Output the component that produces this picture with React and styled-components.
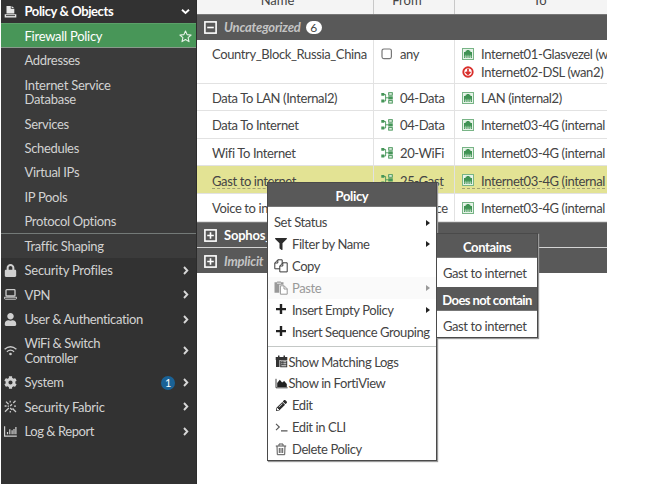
import React from "react";
import styled, { createGlobalStyle, css } from "styled-components";
import { FaLock, FaUser, FaCog, FaFilter, FaPencilAlt } from "react-icons/fa";

const GlobalStyle = createGlobalStyle`
  * { box-sizing: border-box; }
  body { margin: 0; background: #fff; overflow: hidden; }
  svg { flex: none; }
`;

const Screen = styled.div`
  position: relative;
  display: flex;
  width: 650px;
  height: 485px;
  padding-left: 1px;
  overflow: hidden;
  font-family: Lato, "Open Sans", sans-serif;
  font-size: 13px;
  line-height: 14.6px;
  letter-spacing: -0.38px;
  color: #444;
  white-space: nowrap;
`;

/* Sidebar */
const Sidebar = styled.nav`
  width: 196px;
  height: 484px;
  flex: none;
  background: #323232;
  border-right: 1px solid #2c2c2c;
  color: #d2d2d2;
`;

const SubMenu = styled.div`
  background: #3b3b3b;
`;

const NavRow = styled.div`
  display: flex;
  align-items: center;
  height: ${(p) => (p.$tall ? 39 : 24.33)}px;
  padding: 1px 6px 0 3px;
`;

const NavHeader = styled(NavRow)`
  height: 23px;
  padding-bottom: 1px;
  background: #323232;
  color: #fff;
  font-weight: 700;
`;

const ActiveRow = styled(NavRow)`
  height: 25px;
  padding-right: 4px;
  background: #489658;
  border-top: 1px solid #5ba169;
  border-bottom: 1px solid #8a9a8c;
  color: #fff;
`;

const LastSubRow = styled(NavRow)`
  height: 25px;
  border-top: 1px solid #747a78;
`;

const NavIcon = styled.span`
  display: flex;
  justify-content: center;
  width: 13px;
  margin-right: 7.5px;
`;

const NavLabel = styled.span`
  flex: 1;
  letter-spacing: ${(p) => p.$ls || -0.33}px;
`;

const CountBadge = styled.span`
  width: 14px;
  height: 14px;
  margin-right: 6px;
  border-radius: 50%;
  background: #1a6296;
  color: #fff;
  font-size: 11px;
  line-height: 14px;
  text-align: center;
`;

/* Policy table */
const Table = styled.main`
  width: 410px;
  height: 273px;
  overflow: hidden;
  background: #fff;
`;

const columns = css`
  display: grid;
  grid-template-columns: 177px 81px 152px;
  grid-template-rows: 100%;
`;

const HeadRow = styled.div`
  ${columns}
  height: 14px;
  background: #f4f4f4;
`;

const HeadCell = styled.div`
  display: flex;
  align-items: flex-end;
  justify-content: center;
  min-height: 0;
  padding-right: ${(p) => p.$shift || 0}px;
  padding-bottom: 6px;
  padding-left: ${(p) => p.$indent || 0}px;
  border-right: ${(p) => (p.$last ? 0 : 1)}px solid #c8c8c8;
  letter-spacing: 0;
`;

const GroupRow = styled.div`
  display: flex;
  align-items: center;
  gap: 7px;
  height: ${(p) => p.$h || 26}px;
  padding-top: ${(p) => p.$drop || 0}px;
  padding-left: 7px;
  background: #595959;
  border-top: 1px solid ${(p) => p.$line || "#777"};
  color: #fff;
`;

const GroupName = styled.span`
  font-weight: 700;
  letter-spacing: -0.2px;
`;

const MutedName = styled(GroupName)`
  color: #c4c4c4;
  font-style: italic;
`;

const GroupCount = styled.span`
  width: 16px;
  height: 13px;
  margin-left: -2px;
  border-radius: 7px;
  background: #fff;
  color: #444;
  font-size: 12px;
  line-height: 13px;
  text-align: center;
`;

const Row = styled.div`
  ${columns}
  height: ${(p) => p.$h || 27.67}px;
  background: ${(p) => (p.$selected ? "#e3e394" : "#fff")};
`;

const Cell = styled.div`
  min-width: 0;
  min-height: 0;
  overflow: hidden;
  padding: 5px 0 0 ${(p) => p.$pad || 7}px;
  border-right: ${(p) => (p.$last ? 0 : 1)}px solid #e2e2e2;
  border-bottom: 1px solid #e2e2e2;
`;

const Entry = styled.div`
  display: ${(p) => (p.$block ? "flex" : "inline-flex")};
  align-items: center;
  gap: 7px;
  height: 18px;
  padding-top: 1px;
  border-bottom: 1px ${(p) => (p.$selected ? "dashed #a0a072" : "solid transparent")};
`;

const EntryText = styled.span`
  position: relative;
  top: 0.5px;
`;

/* Context menus */
const Menu = styled.div`
  position: absolute;
  top: 182px;
  left: 267px;
  width: 170px;
  height: 279px;
  border: 1px solid #4a4a4a;
  background: #fff;
  box-shadow: 1px 1px 1px 0 #999;
  letter-spacing: -0.42px;
`;

const SideMenu = styled(Menu)`
  top: 233px;
  left: 436px;
  width: 102px;
  height: 105px;
`;

const MenuTitle = styled.div`
  height: 24px;
  background: #595959;
  border-bottom: 1px solid #777;
  color: #fff;
  font-weight: 700;
  line-height: 26px;
  text-align: center;
  letter-spacing: ${(p) => p.$ls || -0.35}px;
`;

const MenuList = styled.div`
  padding-top: 4.6px;
`;

const MenuItem = styled.div`
  display: flex;
  align-items: center;
  height: 21.9px;
  padding: 0 6px;
  background: ${(p) => (p.$disabled ? "#fafafa" : "#fff")};
  color: ${(p) => (p.$disabled ? "#999" : "#444")};
`;

const MenuIcon = styled.span`
  display: flex;
  flex: none;
  align-items: center;
  justify-content: center;
  width: 14px;
  margin-right: ${(p) => (p.$tight ? 0.5 : 4)}px;
  color: ${(p) => (p.$disabled ? "#999" : "#2c2c2c")};
`;

const MenuLabel = styled.span`
  flex: 1;
`;

const Caret = styled.i`
  border: 3px solid transparent;
  border-left: 4px solid ${(p) => (p.$disabled ? "#999" : "#222")};
  border-right: 0;
`;

const Divider = styled.div`
  height: 1px;
  margin: 3px 0 4px;
  background: #c4c8c6;
`;

const SideItem = styled.div`
  height: 29px;
  padding-left: 6px;
  line-height: 31px;
`;

/* Drawings */
const Chevron = ({ down }) => (
  <svg width="9" height="9" viewBox="0 0 9 9" fill="none" stroke={down ? "#fff" : "#d8d8d8"} strokeWidth="1.9">
    <path d={down ? "M1 2.8 4.5 6 8 2.8" : "M3 1 6.3 4.5 3 8"} />
  </svg>
);

const Star = () => (
  <svg width="13" height="13" viewBox="0 0 13 13" fill="none" stroke="#e8f4ea" strokeWidth="1.1" strokeLinejoin="round">
    <path d="m6.5 1 1.6 3.6 4 .4-3 2.6.9 4-3.5-2.1L3 11.6l.9-4L.9 5l4-.4z" />
  </svg>
);

const PolicyIcon = () => (
  <svg width="13" height="12" viewBox="0 0 13 12" fill="#e6e6e6">
    <path d="M2.5 0h4.3v2.8h3.5v4.7H2.5z" />
    <path d="m7.6 0 2.5 2.1H7.6zM.7 8.2h11.6v3.2H.7z" />
    <path d="M2 9.2h9v.9H2z" fill="#323232" />
  </svg>
);

const Laptop = () => (
  <svg width="13" height="11" viewBox="0 0 13 11" fill="none" stroke="#ccc">
    <rect x="2" y=".7" width="9" height="6.3" rx=".8" strokeWidth="1.3" />
    <path d="M.5 8.2h12v1.3q-.2.7-.8.7H1.3Q.5 10 .5 9.5z" />
  </svg>
);

const Wifi = () => (
  <svg width="13" height="11" viewBox="0 0 13 11" fill="none" stroke="#ccc" strokeWidth="1.3">
    <path d="M.6 4.3Q6.5-.9 12.4 4.3M2.9 6.7q3.6-3 7.2 0" />
    <circle cx="6.5" cy="9" r="1.3" fill="#ccc" stroke="none" />
  </svg>
);

const Fabric = () => (
  <svg width="13" height="13" viewBox="0 0 13 13" fill="none" stroke="#c8c8c8" strokeWidth="1.3">
    <path d="M2 1.6 4.6 4.2M6.2 6 8 4.2M9.2 3l2.3-2.3M1 11.8l3.8-3.8M9 9l3 3M6.2 8l1.7 1.7" />
    <path d="M6.2.8v1.6M10 6.2h2M6.3 11v1.5M.6 6h2M3.6 6.2h1.4M9.6 9H8.3" />
  </svg>
);

const Chart = () => (
  <svg width="13" height="11" viewBox="0 0 13 11" fill="none" stroke="#d2d2d2">
    <path d="M.6.3v9.8h12.2" strokeWidth="1.2" />
    <path d="M3.5 8.2V6M5.8 8.2V3.2M8.1 8.2V4.2M10 8.2V3M11.9 8.2V1" strokeWidth="1.2" />
  </svg>
);

const Toggle = ({ plus }) => (
  <svg width="13" height="13" viewBox="0 0 13 13" fill="none" stroke="#fff">
    <rect x=".9" y=".9" width="11.2" height="11.2" strokeWidth="1.6" />
    <path d={plus ? "M3.2 6.5h6.6M6.5 3.2v6.6" : "M3.2 6.5h6.6"} strokeWidth="1.6" />
  </svg>
);

const Zone = () => (
  <svg width="12" height="12" viewBox="0 0 12 12" fill="none" stroke="#459558">
    <path d="M2.5 2.5H4.6V9H2.5M4.6 5.8H7.4" strokeWidth=".9" />
    <path d="M.3 1h3v2.8h-3zM.3 7.6h3v2.8h-3z" fill="#459558" stroke="none" />
    <rect x="7.7" y=".7" width="3.6" height="2.5" fill="#f4faf4" />
    <path d="M7.2 4.3h4.6v3.2H7.2z" fill="#459558" stroke="none" />
    <rect x="7.7" y="8.6" width="3.6" height="2.5" fill="#f4faf4" />
  </svg>
);

const Port = () => (
  <svg width="12" height="12" viewBox="0 0 12 12">
    <rect x=".5" y=".5" width="11" height="11" fill="#e6f3e8" stroke="#78b486" />
    <path d="M2 8.6V4h1.6V2.8h1.1V2h2.6v.8h1.1V4H10v4.6z" fill="#3f9253" />
    <path d="M2.5 8.4v1.6M4.2 8.4v1.6M6 8.4v1.6M7.8 8.4v1.6M9.5 8.4v1.6" stroke="#3f9253" strokeWidth=".9" />
    <path d="M3.4 6.8v2M5.1 6.8v2M6.9 6.8v2M8.6 6.8v2" stroke="#b7dfbf" strokeWidth=".6" />
  </svg>
);

const Down = () => (
  <svg width="12" height="12" viewBox="0 0 12 12" fill="none">
    <circle cx="6" cy="6" r="4.7" stroke="#d9302c" strokeWidth="1.9" />
    <path d="M6 2.8v5M3.6 5.8 6 8.2l2.4-2.4" stroke="#d9302c" strokeWidth="1.7" />
  </svg>
);

const AnyBox = () => (
  <svg width="12" height="12" viewBox="0 0 12 12" fill="none">
    <rect x="1" y="1" width="9.4" height="9.6" rx="1.8" stroke="#777" strokeWidth="1.2" />
  </svg>
);

const Copy = () => (
  <svg width="14" height="14" viewBox="0 0 14 14" fill="#fff" stroke="#3a3a3a" strokeLinejoin="round">
    <path d="M3.8.8h4.4v9H.8V4z" />
    <path d="M3.8.8V4h-3" fill="none" />
    <path d="M8.8 3.8h4.4v9.1H5.8V7z" />
    <path d="M8.8 3.8V7h-3" fill="none" />
  </svg>
);

const Paste = () => (
  <svg width="14" height="14" viewBox="0 0 14 14" fill="#999">
    <path d="M.5 1.3h2.3L3.3.5h3.4l.5.8h2.3v2.5H5.3v8H.5z" />
    <path d="M3 2.2h4" stroke="#fff" strokeWidth=".8" />
    <path d="M6.4 4.8h3.8l3 3v5.4H6.4z" fill="#fff" stroke="#999" />
    <path d="M10 4.8V8h3.2" fill="none" stroke="#999" />
  </svg>
);

const Plus = () => (
  <svg width="12" height="12" viewBox="0 0 12 12" stroke="#222" strokeWidth="2.4">
    <path d="M1 5.1h10M6 .1v10" />
  </svg>
);

const Logs = () => (
  <svg width="13" height="13" viewBox="0 0 13 13" fill="#333">
    <path d="M.7 2h11.6v3H.7zM3 .4h1.5v3H3zM8.5.4H10v3H8.5z" />
    <path d="M1 5h3.5v7H1zM5.2 5.6h7v6.7h-7z" />
    <path d="M6.3 6.8h1.2M8.3 6.8h3M6.3 8.8h1.2M8.3 8.8h3M6.3 10.8h5" stroke="#fff" strokeWidth=".9" />
  </svg>
);

const Area = () => (
  <svg width="13" height="11" viewBox="0 0 13 11" fill="#222">
    <path d="M1 .8v9h11.6" fill="none" stroke="#444" />
    <path d="M2.2 8.9V5l2.6-3.2 2.3 2.7 2.1-1.4 2.6 3v2.8z" />
  </svg>
);

const Cli = () => (
  <svg width="13" height="11" viewBox="0 0 13 11" fill="none" stroke="#555" strokeWidth="1.1">
    <path d="M1 1.8 4.3 5 1 8.2M6 8.9h6.5" />
  </svg>
);

const Trash = () => (
  <svg width="12" height="13" viewBox="0 0 12 13" fill="none" stroke="#555">
    <path d="M.8 3h10.4M4 2.8V1h4v1.8M2 3l.3 8.7h7.4L10 3M4.3 5v5M6 5v5M7.7 5v5" />
  </svg>
);

const subItems = ["Services", "Schedules", "Virtual IPs", "IP Pools", "Protocol Options"];

const sections = [
  { label: "Security Profiles", icon: <FaLock size={13} color="#d0d0d0" />, ls: -0.24 },
  { label: "VPN", icon: <Laptop /> },
  { label: "User & Authentication", icon: <FaUser size={13} color="#d0d0d0" />, ls: -0.38 },
  { label: ["WiFi & Switch", "Controller"], icon: <Wifi />, ls: -0.42 },
  { label: "System", icon: <FaCog size={13} color="#d0d0d0" />, count: 1 },
  { label: "Security Fabric", icon: <Fabric />, ls: -0.24 },
  { label: "Log & Report", icon: <Chart />, ls: -0.45 },
];

const policies = [
  { name: "Country_Block_Russia_China", from: "any", any: true, h: 43.5, to: [["Internet01-Glasvezel (w"], ["Internet02-DSL (wan2)", true]] },
  { name: "Data To LAN (Internal2)", from: "04-Data", to: [["LAN (internal2)"]] },
  { name: "Data To Internet", from: "04-Data", to: [["Internet03-4G (internal"]] },
  { name: "Wifi To Internet", from: "20-WiFi", to: [["Internet03-4G (internal"]] },
  { name: "Gast to internet", from: "25-Gast", to: [["Internet03-4G (internal"]], selected: true },
  { name: "Voice to internet", from: "30-Voice", to: [["Internet03-4G (internal"]] },
];

const actions = [
  { label: "Set Status", more: true },
  { label: "Filter by Name", icon: <FaFilter size={12} />, more: true },
  { label: "Copy", icon: <Copy /> },
  { label: "Paste", icon: <Paste />, more: true, disabled: true },
  { label: "Insert Empty Policy", icon: <Plus />, more: true },
  { label: "Insert Sequence Grouping", icon: <Plus /> },
];

const tools = [
  { label: "Show Matching Logs", icon: <Logs />, tight: true },
  { label: "Show in FortiView", icon: <Area />, tight: true },
  { label: "Edit", icon: <FaPencilAlt size={11} /> },
  { label: "Edit in CLI", icon: <Cli /> },
  { label: "Delete Policy", icon: <Trash /> },
];

const Action = ({ a }) => (
  <MenuItem $disabled={a.disabled}>
    {a.icon && <MenuIcon $tight={a.tight} $disabled={a.disabled}>{a.icon}</MenuIcon>}
    <MenuLabel>{a.label}</MenuLabel>
    {a.more && <Caret $disabled={a.disabled} />}
  </MenuItem>
);

const SubRow = ({ children, tall }) => (
  <NavRow $tall={tall}>
    <NavIcon />
    <NavLabel $ls={tall ? -0.26 : undefined}>{children}</NavLabel>
  </NavRow>
);

export default function App() {
  return (
    <>
      <GlobalStyle />
      <Screen>
        <Sidebar>
          <NavHeader>
            <NavIcon><PolicyIcon /></NavIcon>
            <NavLabel $ls={-0.4}>Policy &amp; Objects</NavLabel>
            <Chevron down />
          </NavHeader>
          <SubMenu>
            <ActiveRow>
              <NavIcon />
              <NavLabel $ls={-0.26}>Firewall Policy</NavLabel>
              <Star />
            </ActiveRow>
            <SubRow>Addresses</SubRow>
            <SubRow tall>Internet Service<br />Database</SubRow>
            {subItems.map((s) => <SubRow key={s}>{s}</SubRow>)}
            <LastSubRow>
              <NavIcon />
              <NavLabel>Traffic Shaping</NavLabel>
            </LastSubRow>
          </SubMenu>
          {sections.map((s, i) => {
            const tall = Array.isArray(s.label);
            return (
              <NavRow key={i} $tall={tall}>
                <NavIcon>{s.icon}</NavIcon>
                <NavLabel $ls={s.ls}>{tall ? <>{s.label[0]}<br />{s.label[1]}</> : s.label}</NavLabel>
                {s.count && <CountBadge>{s.count}</CountBadge>}
                <Chevron />
              </NavRow>
            );
          })}
        </Sidebar>

        <Table>
          <HeadRow>
            <HeadCell $shift={15}>Name</HeadCell>
            <HeadCell $shift={14}>From</HeadCell>
            <HeadCell $last $indent={18}>To</HeadCell>
          </HeadRow>
          <GroupRow>
            <Toggle />
            <MutedName>Uncategorized</MutedName>
            <GroupCount>6</GroupCount>
          </GroupRow>
          {policies.map((p) => (
            <Row key={p.name} $h={p.h} $selected={p.selected}>
              <Cell $pad={15}>
                <Entry $selected={p.selected}><EntryText>{p.name}</EntryText></Entry>
              </Cell>
              <Cell>
                <Entry $selected={p.selected}>
                  {p.any ? <AnyBox /> : <Zone />}
                  <EntryText>{p.from}</EntryText>
                </Entry>
              </Cell>
              <Cell $last>
                {p.to.map(([name, down]) => (
                  <Entry key={name} $block={p.to.length > 1} $selected={p.selected}>
                    {down ? <Down /> : <Port />}
                    <EntryText>{name}</EntryText>
                  </Entry>
                ))}
              </Cell>
            </Row>
          ))}
          <GroupRow $h={25} $drop={2}>
            <Toggle plus />
            <GroupName>Sophos_Connect</GroupName>
          </GroupRow>
          <GroupRow $h={27} $drop={1} $line="#d4d4d4">
            <Toggle plus />
            <MutedName>Implicit</MutedName>
          </GroupRow>
        </Table>

        <Menu>
          <MenuTitle>Policy</MenuTitle>
          <MenuList>
            {actions.map((a) => <Action key={a.label} a={a} />)}
            <Divider />
            {tools.map((a) => <Action key={a.label} a={a} />)}
          </MenuList>
        </Menu>

        <SideMenu>
          <MenuTitle>Contains</MenuTitle>
          <SideItem>Gast to internet</SideItem>
          <MenuTitle $ls={-0.58}>Does not contain</MenuTitle>
          <SideItem>Gast to internet</SideItem>
        </SideMenu>
      </Screen>
    </>
  );
}
